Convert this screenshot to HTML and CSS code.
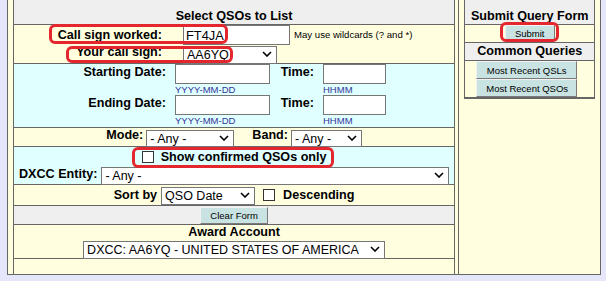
FILE: index.html
```html
<!DOCTYPE html>
<html>
<head>
<meta charset="utf-8">
<title>Select QSOs to List</title>
<link rel="stylesheet" href="styles.css">
</head>
<body>
<div class="outer">
  <div class="left">
    <div class="hdr">Select QSOs to List</div>

    <div class="sec cream calls">
      <div class="crow crow-a">
        <span class="lbl clbl">Call sign worked:</span>
        <input class="inp in-call" type="text" value="FT4JA">
        <span class="note">May use wildcards (? and *)</span>
      </div>
      <div class="crow crow-b">
        <span class="lbl clbl">Your call sign:</span>
        <span class="selw w-mycall"><select class="sel"><option>AA6YQ</option></select><svg class="chev" width="10" height="6" viewBox="0 0 10 6"><path d="M1 1l4 4 4-4" fill="none" stroke="#000" stroke-width="1.6"/></svg></span>
      </div>
    </div>

    <div class="sec cyan dates">
      <span class="lbl dlbl">Starting Date:</span>
      <div class="field"><input class="inp in-date" type="text"><span class="hint">YYYY-MM-DD</span></div>
      <span class="lbl tlbl">Time:</span>
      <div class="field"><input class="inp in-time" type="text"><span class="hint">HHMM</span></div>
      <span class="lbl dlbl">Ending Date:</span>
      <div class="field"><input class="inp in-date" type="text"><span class="hint">YYYY-MM-DD</span></div>
      <span class="lbl tlbl">Time:</span>
      <div class="field"><input class="inp in-time" type="text"><span class="hint">HHMM</span></div>
    </div>

    <div class="sec cream moderow">
      <span class="lbl rl">Mode:</span>
      <span class="selw w-mode"><select class="sel"><option>- Any -</option></select><svg class="chev" width="10" height="6" viewBox="0 0 10 6"><path d="M1 1l4 4 4-4" fill="none" stroke="#000" stroke-width="1.6"/></svg></span>
      <span class="lbl rl band">Band:</span>
      <span class="selw w-band"><select class="sel"><option>- Any -</option></select><svg class="chev" width="10" height="6" viewBox="0 0 10 6"><path d="M1 1l4 4 4-4" fill="none" stroke="#000" stroke-width="1.6"/></svg></span>
    </div>

    <div class="sec cyan confirm">
      <div class="conf-row">
        <input class="cb" type="checkbox">
        <span class="lbl">Show confirmed QSOs only</span>
      </div>
      <div class="dxcc-row">
        <span class="lbl">DXCC Entity:</span>
        <span class="selw w-dxcc"><select class="sel"><option>- Any -</option></select><svg class="chev" width="10" height="6" viewBox="0 0 10 6"><path d="M1 1l4 4 4-4" fill="none" stroke="#000" stroke-width="1.6"/></svg></span>
      </div>
    </div>

    <div class="sec cream sortrow">
      <span class="lbl">Sort by</span>
      <span class="selw w-sort"><select class="sel"><option>QSO Date</option></select><svg class="chev" width="10" height="6" viewBox="0 0 10 6"><path d="M1 1l4 4 4-4" fill="none" stroke="#000" stroke-width="1.6"/></svg></span>
      <input class="cb cb-desc" type="checkbox">
      <span class="lbl desc">Descending</span>
    </div>

    <div class="sec gray clearrow">
      <button class="btn" type="button">Clear Form</button>
    </div>

    <div class="sec cream award">
      <span class="lbl award-t">Award Account</span>
      <span class="selw w-award"><select class="sel"><option>DXCC: AA6YQ - UNITED STATES OF AMERICA</option></select><svg class="chev" width="10" height="6" viewBox="0 0 10 6"><path d="M1 1l4 4 4-4" fill="none" stroke="#000" stroke-width="1.6"/></svg></span>
    </div>

    <div class="sec cream empty"></div>
  </div>

  <div class="right">
    <div class="rbox">
      <div class="hdr">Submit Query Form</div>
      <div class="sec cream subrow">
        <button class="btn" type="submit">Submit</button>
      </div>
      <div class="sec gray cq">Common Queries</div>
      <div class="sec cream qbtns">
        <button class="btn qbtn" type="button">Most Recent QSLs</button>
        <button class="btn qbtn" type="button">Most Recent QSOs</button>
      </div>
    </div>
  </div>
</div>

<div class="mark mark-1"></div>
<div class="mark mark-2"></div>
<div class="mark mark-3"></div>
<div class="mark mark-4"></div>
</body>
</html>
```

FILE: styles.css
```css
html, body {
  margin: 0;
  padding: 0;
}
body {
  position: relative;
  background: #e6e6fa;
  font-family: "Liberation Sans", Arial, sans-serif;
  color: #000;
  width: 606px;
  height: 281px;
  overflow: hidden;
}

.outer {
  box-sizing: border-box;
  margin-left: 7px;
  width: 594px;
  height: 275px;
  border: 1px solid #666;
  border-top: none;
  background: #ffffe0;
  padding-left: 5px;
  display: flex;
  align-items: stretch;
}

.left {
  width: 441px;
  border-left: 1px solid #666;
  border-right: 1px solid #666;
  display: flex;
  flex-direction: column;
}

.right {
  margin-left: 3px;
  width: 136px;
  border-left: 1px solid #666;
  padding-left: 5px;
}

.rbox {
  width: 129px;
  border: 1px solid #666;
  border-top: none;
}

.hdr {
  height: 16px;
  padding-top: 8px;
  line-height: 16px;
  background: #efefef;
  border-bottom: 1px solid #666;
  text-align: center;
  font-weight: bold;
  font-size: 12.6px;
}

.sec {
  border-bottom: 1px solid #666;
}
.sec.empty {
  border-bottom: none;
  height: 15px;
}
.cream { background: #ffffe0; }
.cyan { background: #e0ffff; }
.gray { background: #efefef; }

.lbl {
  font-weight: bold;
  font-size: 12.6px;
  white-space: nowrap;
}

/* inputs & selects */
.inp {
  box-sizing: border-box;
  height: 20px;
  margin: 0;
  padding: 0 2px;
  border: 1px solid #767676;
  background: #fff;
  font-family: "Liberation Sans", Arial, sans-serif;
  font-size: 12.8px;
  color: #000;
  outline: none;
}

.selw {
  position: relative;
  display: inline-block;
  height: 18px;
}
.sel {
  -webkit-appearance: none;
  appearance: none;
  box-sizing: border-box;
  width: 100%;
  height: 100%;
  margin: 0;
  padding: 0 16px 0 3px;
  border: 1px solid #767676;
  border-radius: 0;
  background: #fff;
  font-family: "Liberation Sans", Arial, sans-serif;
  font-size: 12.5px;
  line-height: 16px;
  color: #000;
  outline: none;
}
.chev {
  position: absolute;
  right: 5px;
  top: 50%;
  margin-top: -3px;
  pointer-events: none;
}

.cb {
  -webkit-appearance: none;
  appearance: none;
  box-sizing: border-box;
  width: 12px;
  height: 12px;
  margin: 0;
  border: 1px solid #333;
  background: #fff;
  border-radius: 0;
}

.btn {
  box-sizing: border-box;
  margin: 0;
  padding: 0 9px;
  font-family: "Liberation Sans", Arial, sans-serif;
  font-size: 9.5px;
  color: #000;
  background: #c9e3e3;
  border: 1px solid;
  border-color: #f2f2f2 #7a7a7a #7a7a7a #f2f2f2;
  border-radius: 0;
  white-space: nowrap;
}

/* call sign section */
.calls { height: 38px; }
.crow { display: flex; }
.crow-a {
  height: 20px;
  align-items: center;
}
.crow-b {
  height: 18px;
  align-items: flex-start;
}
.clbl {
  box-sizing: border-box;
  width: 169px;
  padding-right: 21px;
  text-align: right;
  line-height: 20px;
}
.crow-b .clbl { line-height: 14px; }
.in-call { width: 107px; }
.note {
  margin-left: 4px;
  font-size: 9.6px;
  line-height: 20px;
  white-space: nowrap;
}
.w-mycall { width: 94px; }

/* dates */
.dates {
  height: 63px;
  display: grid;
  grid-template-columns: 161px 95px 53px 63px;
  grid-template-rows: 31px 32px;
}
.dlbl, .tlbl {
  box-sizing: border-box;
  text-align: right;
  padding-right: 9px;
  line-height: 16px;
}
.field {
  display: flex;
  flex-direction: column;
}
.in-date, .in-time { width: 100%; }
.hint {
  font-size: 9.5px;
  line-height: 11px;
  color: #333399;
  white-space: nowrap;
}

/* mode / band */
.moderow {
  height: 18px;
  display: flex;
  justify-content: center;
  align-items: flex-start;
}
.rl { line-height: 15px; }
.moderow .selw {
  height: 17px;
  margin-top: 1px;
  margin-left: 3px;
}
.w-mode { width: 88px; }
.w-band { width: 71px; }
.band { margin-left: 18px; }

/* confirmed / dxcc */
.confirm {
  height: 37px;
  display: flex;
  flex-direction: column;
}
.conf-row {
  box-sizing: border-box;
  height: 18px;
  padding-top: 2px;
  display: flex;
  justify-content: center;
  align-items: center;
}
.conf-row .cb { margin-right: 7px; }
.conf-row .lbl { line-height: 16px; }
.dxcc-row {
  height: 19px;
  display: flex;
  align-items: flex-end;
  padding-left: 5px;
}
.dxcc-row .lbl {
  align-self: center;
  line-height: 15px;
}
.w-dxcc {
  width: 348px;
  margin-left: 4px;
}

/* sort */
.sortrow {
  height: 20px;
  display: flex;
  justify-content: center;
  align-items: center;
}
.w-sort {
  width: 94px;
  margin-left: 4px;
}
.cb-desc { margin-left: 8px; }
.desc { margin-left: 8px; }

/* clear */
.clearrow {
  height: 18px;
  display: flex;
  justify-content: center;
  align-items: flex-end;
}
.clearrow .btn { height: 17px; }

/* award */
.award {
  height: 33px;
  display: flex;
  flex-direction: column;
  align-items: center;
}
.award-t { line-height: 15px; }
.w-award { width: 302px; }

/* right panel */
.subrow {
  height: 17px;
  display: flex;
  justify-content: center;
  align-items: flex-start;
}
.subrow .btn { height: 16px; }
.cq {
  height: 17px;
  line-height: 17px;
  text-align: center;
  font-weight: bold;
  font-size: 12.6px;
}
.qbtns {
  height: 36px;
  display: flex;
  flex-direction: column;
}
.qbtn {
  width: 101px;
  height: 18px;
  margin-left: 11px;
}

/* red annotation marks */
.mark {
  position: absolute;
  box-sizing: border-box;
  border: 3px solid #e4262e;
  border-radius: 6px;
  pointer-events: none;
}
.mark-1 { left: 49px; top: 24px; width: 179px; height: 20px; }
.mark-2 { left: 66px; top: 46px; width: 167px; height: 17px; }
.mark-3 { left: 132px; top: 147px; width: 202px; height: 21px; }
.mark-4 { left: 500px; top: 22px; width: 59px; height: 20px; }
```
